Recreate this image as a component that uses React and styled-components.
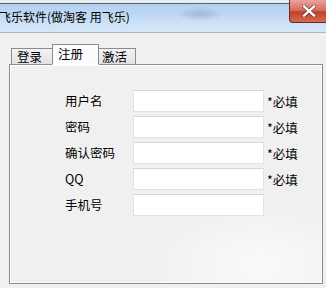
import React from 'react';
import styled, { createGlobalStyle } from 'styled-components';

const GlobalStyle = createGlobalStyle`
  html, body { margin: 0; padding: 0; background: #f0f0f0; overflow: hidden; }
  * { box-sizing: border-box; }
`;

const Window = styled.div`
  width: 326px;
  height: 288px;
  display: flex;
  flex-direction: column;
  background: #f0f0f0;
  font-family: "Microsoft YaHei", "Noto Sans CJK SC", "Noto Sans", sans-serif;
  color: #000;
`;

const TitleBar = styled.div`
  height: 33px;
  display: flex;
  justify-content: space-between;
  align-items: flex-start;
  border-bottom: 1px solid #a7b4c2;
  background:
    radial-gradient(ellipse 26px 7px at 200px 14px, rgba(110, 130, 155, 0.35), transparent),
    linear-gradient(
      #e9eef3 0, #e9eef3 3px,
      #56626e 3px, #56626e 4px,
      #b3d0f0 4px, #bdd7f3 40%, #cde2f7 75%, #d6e6f8 100%
    );
`;

const Title = styled.div`
  padding-top: 10px;
  font-size: 12px;
  line-height: 14px;
  white-space: nowrap;
  margin-left: -1px;
`;

const CloseButton = styled.div`
  width: 39px;
  height: 23px;
  margin-right: -2px;
  border: 1px solid #6b2a22;
  border-top: none;
  border-radius: 0 0 4px 4px;
  background: linear-gradient(#e8a49a 0%, #d5705f 45%, #c0412c 55%, #d76b4f 100%);
  display: flex;
  align-items: center;
  justify-content: center;
  svg { display: block; }
`;

const Body = styled.div`
  flex: 1;
  padding: 11px 3px 4px 9px;
  display: flex;
  flex-direction: column;
`;

const TabRow = styled.div`
  display: flex;
  align-items: flex-end;
  padding-left: 2px;
  height: 21px;
  position: relative;
  z-index: 1;
  margin-bottom: -1px;
`;

const Tab = styled.div`
  width: ${p => p.$w}px;
  height: ${p => (p.$active ? '21px' : '17px')};
  margin: 0 ${p => (p.$active ? '-2px' : '0')};
  padding-left: ${p => p.$pl}px;
  border: 1px solid #898c95;
  border-bottom: ${p => (p.$active ? '1px solid #fcfcfc' : '1px solid #898c95')};
  background: ${p => (p.$active ? '#fcfcfc' : 'linear-gradient(#f3f3f3, #e2e2e2)')};
  font-size: 12.5px;
  line-height: ${p => (p.$active ? '14px' : '16px')};
  padding-top: ${p => (p.$active ? '2px' : '0')};
  z-index: ${p => (p.$active ? 2 : 1)};
  position: relative;
  white-space: nowrap;
`;

const Panel = styled.div`
  flex: 1;
  border: 1px solid #898c95;
  box-shadow: inset 1px 1px 0 #fff, inset -1px -1px 0 #fafafa;
  background:
    radial-gradient(ellipse 110px 60px at 250px 200px, rgba(255, 255, 255, 0.7), transparent),
    #f0f0f0;
  padding-top: 25px;
  padding-left: 55px;
`;

const Form = styled.div`
  display: grid;
  grid-template-columns: 68px 131px auto;
  row-gap: 4px;
  align-items: center;
`;

const Label = styled.div`
  font-size: 12.5px;
  line-height: 22px;
  white-space: nowrap;
`;

const Input = styled.div`
  height: 22px;
  background: #fff;
  border: 1px solid #e2e2e2;
  border-top-color: #d5d5d5;
`;

const Required = styled.div`
  font-size: 12.5px;
  padding-left: 3px;
  white-space: nowrap;
`;

const fields = [
  { label: '用户名', required: true },
  { label: '密码', required: true },
  { label: '确认密码', required: true },
  { label: 'QQ', required: true },
  { label: '手机号', required: false },
];

export default function App() {
  return (
    <>
      <GlobalStyle />
      <Window>
        <TitleBar>
          <Title>飞乐软件(做淘客 用飞乐)</Title>
          <CloseButton>
            <svg width="14" height="12" viewBox="0 0 14 12">
              <path d="M2 1.5 L12 10.5 M12 1.5 L2 10.5" stroke="#5a1a12" strokeWidth="3.6" strokeLinecap="square" />
              <path d="M2 1.5 L12 10.5 M12 1.5 L2 10.5" stroke="#fff" strokeWidth="2.4" strokeLinecap="square" />
            </svg>
          </CloseButton>
        </TitleBar>
        <Body>
          <TabRow>
            <Tab $w={43} $pl={5}>登录</Tab>
            <Tab $w={47} $pl={5} $active>注册</Tab>
            <Tab $w={39} $pl={4}>激活</Tab>
          </TabRow>
          <Panel>
            <Form>
              {fields.map(f => (
                <React.Fragment key={f.label}>
                  <Label>{f.label}</Label>
                  <Input />
                  <Required>{f.required ? '*必填' : ''}</Required>
                </React.Fragment>
              ))}
            </Form>
          </Panel>
        </Body>
      </Window>
    </>
  );
}
